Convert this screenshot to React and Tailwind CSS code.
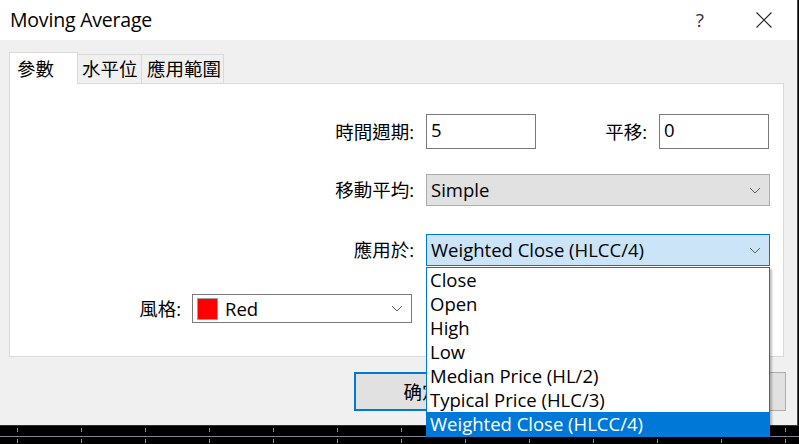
import React from 'react';

const font = { fontFamily: '"Open Sans", "Noto Sans CJK TC", sans-serif' };

const Chevron = () => (
  <svg width="12" height="7" viewBox="0 0 12 7" className="shrink-0">
    <path d="M1 1 L6 6 L11 1" fill="none" stroke="#5f5f5f" strokeWidth="1" />
  </svg>
);

const options = [
  'Close',
  'Open',
  'High',
  'Low',
  'Median Price (HL/2)',
  'Typical Price (HLC/3)',
  'Weighted Close (HLCC/4)',
];

const App = () => {
  const selected = 6;

  return (
    <div className="relative w-[799px] h-[444px] bg-black overflow-hidden text-[18.5px] text-black" style={font}>
      {/* dialog window */}
      <div className="w-[798px] h-[425px] flex flex-col bg-[#f0f0f0] border-r border-[#4a4a4a]">
        {/* title bar */}
        <div className="h-[40px] bg-white flex items-center pl-[10px] shrink-0">
          <span className="text-[19.5px] tracking-[-0.2px]">Moving Average</span>
          <span className="ml-auto text-[19px] text-[#333] mr-[52px]">?</span>
          <svg width="16" height="16" viewBox="0 0 16 16" className="mr-[25px]">
            <path d="M0.5 0.5 L15.5 15.5 M15.5 0.5 L0.5 15.5" stroke="#222" strokeWidth="1.1" />
          </svg>
        </div>

        {/* body */}
        <div className="pl-[9px] pt-[12px]">
          {/* tabs */}
          <div className="flex items-end h-[31px]">
            <div className="relative z-10 -mb-px w-[69px] h-[32px] bg-white border border-b-0 border-[#d9d9d9] flex items-center pl-[7px]">
              參數
            </div>
            <div className="w-[64px] h-[29px] border-t border-r border-[#d9d9d9] flex items-center pl-[4px]">
              水平位
            </div>
            <div className="w-[82px] h-[29px] border-t border-r border-[#d9d9d9] flex items-center pl-[5px]">
              應用範圍
            </div>
          </div>

          {/* panel */}
          <div className="w-[775px] h-[274px] bg-white border border-[#d9d9d9] flex flex-col">
            <div className="flex items-center h-[35px] mt-[30px]">
              <span className="w-[404px] text-right">時間週期:</span>
              <div className="ml-[12px] w-[110px] h-[35px] border border-[#7a7a7a] pl-[4px] leading-[30px]">5</div>
              <span className="w-[111px] text-right">平移:</span>
              <div className="ml-[12px] w-[110px] h-[35px] border border-[#7a7a7a] pl-[4px] leading-[30px]">0</div>
            </div>

            <div className="flex items-center h-[32px] mt-[25px]">
              <span className="w-[404px] text-right">移動平均:</span>
              <div className="ml-[12px] w-[344px] h-[32px] bg-[#e1e1e1] border border-[#adadad] flex items-center pl-[4px] pr-[8px]">
                <span>Simple</span>
                <span className="ml-auto"><Chevron /></span>
              </div>
            </div>

            <div className="flex items-center h-[32px] mt-[28px]">
              <span className="w-[404px] text-right">應用於:</span>
              <div className="ml-[12px] w-[344px] h-[32px] bg-[#cce4f7] border border-[#0078d7] flex items-center pl-[4px] pr-[8px]">
                <span>Weighted Close (HLCC/4)</span>
                <span className="ml-auto"><Chevron /></span>
              </div>
            </div>

            <div className="flex items-center h-[29px] mt-[28px]">
              <span className="w-[171px] text-right">風格:</span>
              <div className="ml-[11px] w-[220px] h-[29px] bg-white border border-[#7a7a7a] flex items-center pl-[4px] pr-[8px]">
                <span className="w-[21px] h-[22px] bg-[#ff0000] border border-[#a0a0a0] shrink-0" />
                <span className="ml-[7px]">Red</span>
                <span className="ml-auto"><Chevron /></span>
              </div>
            </div>
          </div>

          {/* buttons */}
          <div className="flex mt-[15px]">
            <div className="ml-[345px] w-[136px] h-[39px] bg-[#e1e1e1] border-2 border-[#0078d7] flex items-center justify-center">
              确定
            </div>
            <div className="ml-[160px] w-[136px] h-[39px] bg-[#e1e1e1] border border-[#adadad] flex items-center justify-center">
              取消
            </div>
          </div>
        </div>
      </div>

      {/* chart strip below */}
      <div className="h-[19px] border-t border-[#2e2e2e] relative">
        <svg width="799" height="18" className="block">
          <line x1="0" y1="10.5" x2="799" y2="10.5" stroke="#7b8591" strokeWidth="1" />
          {Array.from({ length: 13 }).map((_, i) => (
            <g key={i}>
              <line x1={17.5 + i * 64} y1="2" x2={17.5 + i * 64} y2="6" stroke="#8a929c" strokeWidth="1" />
              <line x1={17.5 + i * 64} y1="13" x2={17.5 + i * 64} y2="17" stroke="#8a929c" strokeWidth="1" />
            </g>
          ))}
        </svg>
      </div>

      {/* open dropdown list */}
      <div className="absolute left-[426px] top-[267px] w-[344px] h-[170px] bg-white border border-[#0078d7] shadow-[2px_2px_2px_rgba(0,0,0,0.25)]">
        {options.map((o, i) => (
          <div
            key={o}
            className={
              i === selected
                ? 'h-[24px] leading-[24px] pl-[3px] bg-[#0078d7] text-white'
                : 'h-[24px] leading-[24px] pl-[3px]'
            }
          >
            {o}
          </div>
        ))}
      </div>
    </div>
  );
};

export default App;
